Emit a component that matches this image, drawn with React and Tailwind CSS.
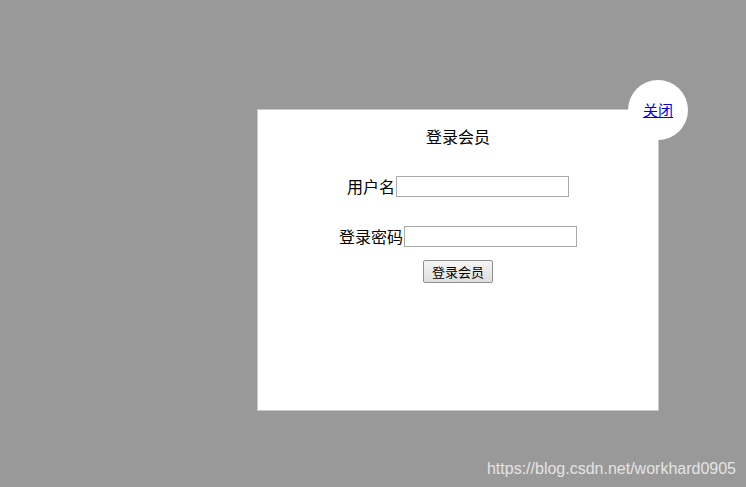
import React from 'react';

const cjk = { fontFamily: '"Noto Sans CJK SC", "Liberation Sans", sans-serif' };

function LoginModal() {
    return (
        <div className="relative w-[402px] h-[302px] bg-white border border-[#c8c8c8] text-black" style={cjk}>
            <a
                href="#"
                className="absolute -top-[30px] -right-[30px] w-[60px] h-[60px] rounded-full bg-white flex items-center justify-center text-[15px] leading-[20px] text-[#0000ee] underline"
            >
                关闭
            </a>
            <h3 className="pt-[16px] text-center text-[16px] leading-[20px] font-normal">登录会员</h3>
            <div className="mt-[30px] flex items-center justify-center">
                <label className="text-[16px] leading-[21px] pr-[1px]">用户名</label>
                <input type="text" className="w-[173px] h-[21px] border border-[#a9a9a9] px-[2px] text-[13px] outline-none" />
            </div>
            <div className="mt-[29px] flex items-center justify-center">
                <label className="text-[16px] leading-[21px] pr-[1px]">登录密码</label>
                <input type="password" className="w-[173px] h-[21px] border border-[#a9a9a9] px-[2px] text-[13px] outline-none" />
            </div>
            <div className="mt-[13px] flex justify-center">
                <button className="w-[70px] h-[23px] border border-[#8f8f8f] rounded-[2px] bg-gradient-to-b from-[#f6f6f6] to-[#dedede] text-[13px] leading-[21px] text-black">
                    登录会员
                </button>
            </div>
        </div>
    );
}

export default function App() {
    return (
        <div className="relative w-full h-[487px] bg-[#999999] overflow-hidden pt-[109px] pl-[257px]">
            <LoginModal />
            <span
                className="absolute right-[10px] bottom-[8px] text-[16px] leading-[20px] text-[#e4e4e4]"
                style={{ fontFamily: '"Liberation Sans", Arial, sans-serif' }}
            >
                https://blog.csdn.net/workhard0905
            </span>
        </div>
    );
}
